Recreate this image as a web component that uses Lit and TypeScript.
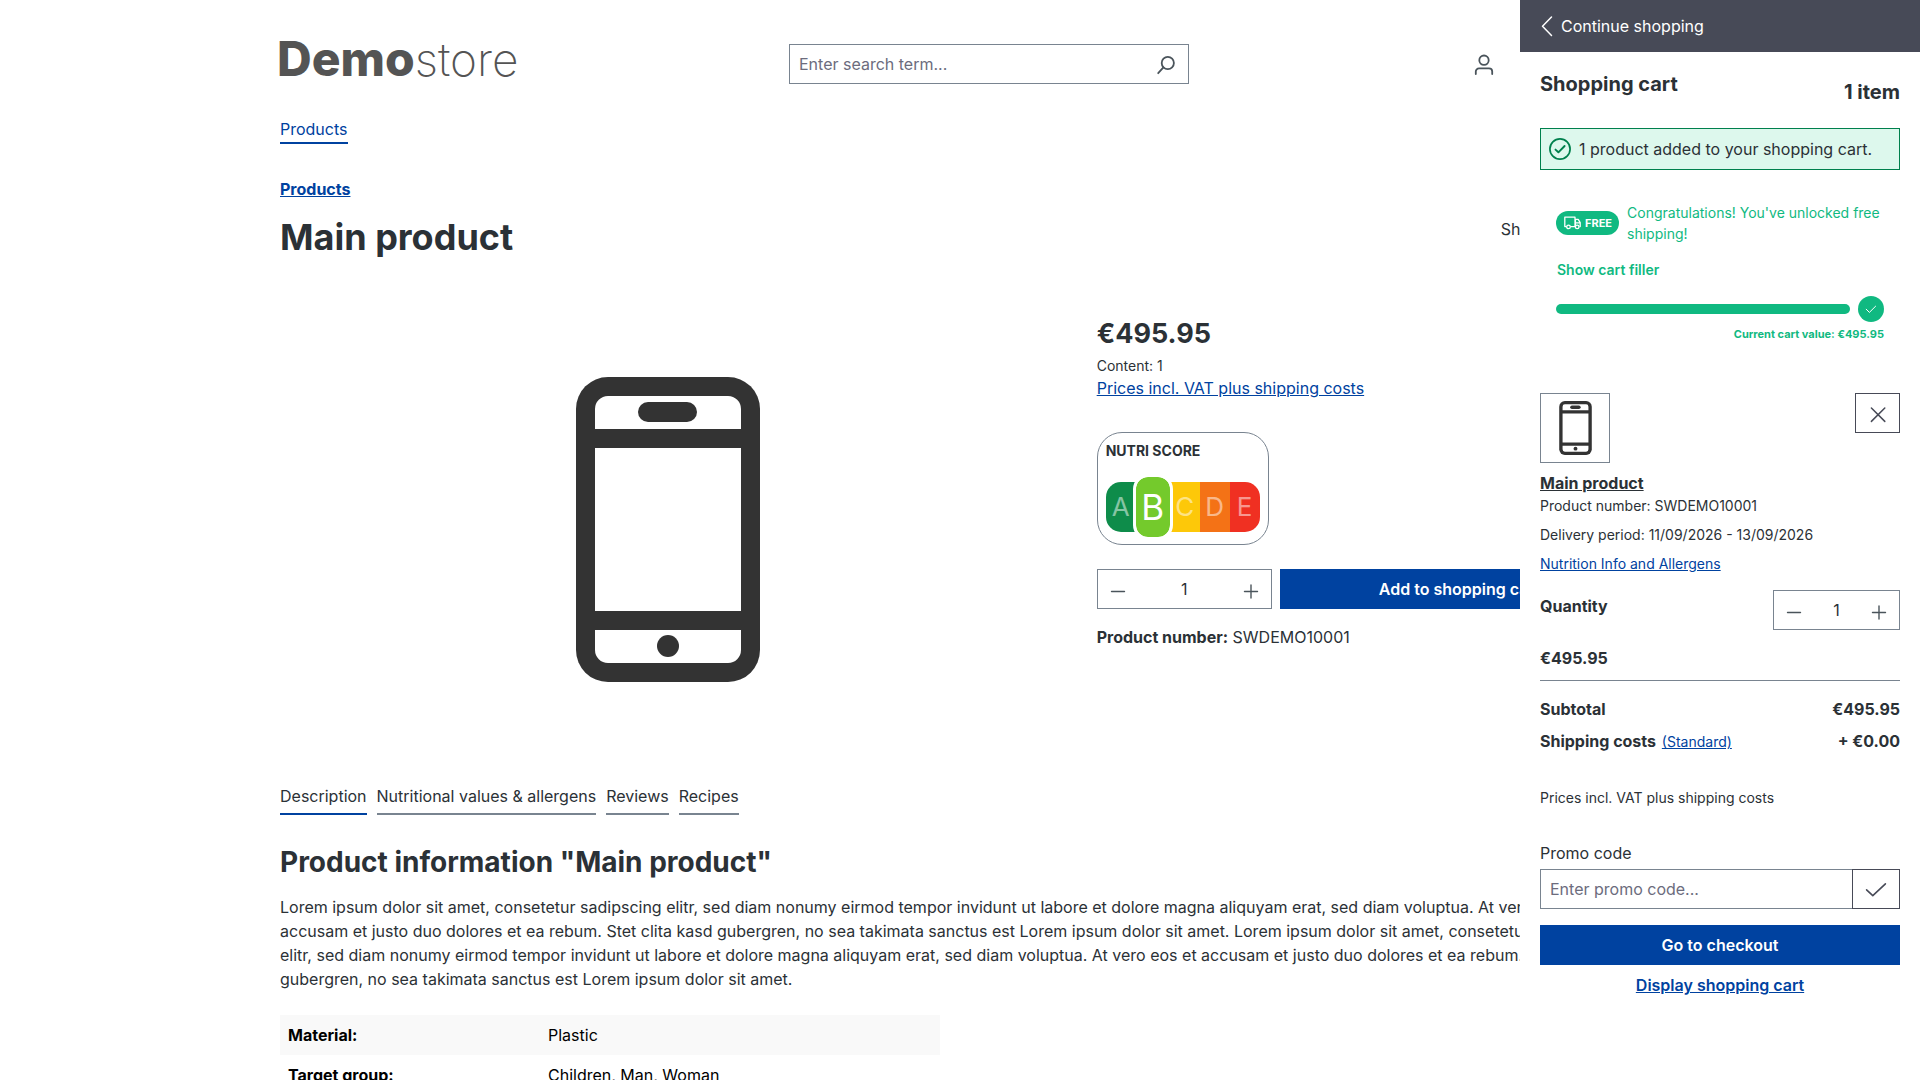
import { LitElement, html, css, svg } from "lit";
import { customElement, property } from "lit/decorators.js";
import { classMap } from "lit/directives/class-map.js";

const base = css`
  * { box-sizing: border-box; }
  h1, h2, p, dl, dd, dt { margin: 0; }
  button, input { font: inherit; color: inherit; margin: 0; border-radius: 0; }
  button { cursor: pointer; background: none; border: 0; padding: 0; }
  svg { display: block; flex: none; }
  a { color: #0042a0; text-decoration: underline; }
  input::placeholder { color: #6c6c7d; opacity: 1; }
  .primary {
    height: 40px; width: 100%; background: #0042a0; color: #fff; font-weight: 600;
    display: flex; align-items: center; justify-content: center; text-decoration: none; white-space: nowrap;
  }
`;

const phone = (height: number) => html`
  <svg width=${Math.round((height * 184) / 305)} height=${height} viewBox="0 0 184 305" role="img" aria-label="Main product">
    ${svg`<rect width="184" height="305" rx="32" fill="#333"/>
    <path d="M19 52V32a13 13 0 0 1 13-13H152a13 13 0 0 1 13 13V52ZM19 71H165V234H19ZM19 253H165V273a13 13 0 0 1-13 13H32a13 13 0 0 1-13-13Z" fill="#fff"/>
    <rect x="62" y="25" width="59" height="20" rx="10" fill="#333"/>
    <circle cx="92" cy="269" r="11" fill="#333"/>`}
  </svg>`;

@customElement("quantity-field")
class QuantityField extends LitElement {
  static styles = [base, css`
    :host { display: flex; min-width: 0; height: 40px; border: 1px solid #798490; background: #fff; }
    .step { width: 40px; display: flex; align-items: center; justify-content: center; color: #4a545b; flex: none; }
    .value { flex: 1; width: 0; min-width: 0; border: 0; padding: 0; text-align: center; background: none; line-height: 24px; }
  `];
  render() {
    return html`
      <button class="step" aria-label="Decrease quantity">
        <svg width="22" height="22" viewBox="0 0 22 22" fill="none" stroke="currentColor" stroke-width="1.4" stroke-linecap="round"><path d="M4.5 13.5H17.5"/></svg>
      </button>
      <input class="value" type="text" inputmode="numeric" aria-label="Quantity" .value=${"1"}>
      <button class="step" aria-label="Increase quantity">
        <svg width="22" height="22" viewBox="0 0 22 22" fill="none" stroke="currentColor" stroke-width="1.4" stroke-linecap="round"><path d="M4.5 13.5H17.5M11 7V20"/></svg>
      </button>`;
  }
}

@customElement("nutri-score")
class NutriScore extends LitElement {
  @property() grade = "B";
  static styles = [base, css`
    :host { display: block; width: 172px; border: 1px solid #798490; border-radius: 25px; padding: 8px 8px 12px; }
    .title { font-size: 14px; line-height: 20px; font-weight: 700; }
    .scale { display: flex; align-items: center; margin-top: 21px; height: 50px; }
    .cell {
      width: 30px; height: 50px; display: flex; align-items: center; justify-content: center;
      font-size: 26px; line-height: 48px; color: rgb(255 255 255 / 0.5);
    }
    .a { background: #0e8c4a; border-radius: 15px 0 0 15px; }
    .b { background: #74ca2c; }
    .c { background: #fdc809; }
    .d { background: #f47216; }
    .e { background: #f03022; border-radius: 0 15px 15px 0; }
    .active {
      width: 40px; height: 66px; margin: 0 -3px; border: 3px solid #fff; border-radius: 15px; z-index: 1;
      font-size: 35px; color: #fff; background-clip: padding-box;
    }
  `];
  render() {
    return html`
      <div class="title">NUTRI SCORE</div>
      <div class="scale">
        ${["A", "B", "C", "D", "E"].map((g) => html`
          <span class=${classMap({ cell: true, [g.toLowerCase()]: true, active: g === this.grade })}>${g}</span>`)}
      </div>`;
  }
}

@customElement("cart-drawer")
class CartDrawer extends LitElement {
  static styles = [base, css`
    :host { display: block; background: #fff; overflow: auto; }
    .back {
      width: 100%; height: 52px; background: #474a57; color: #fff; padding: 0 20px;
      display: flex; align-items: center; gap: 5px;
    }
    .body { padding: 20px; display: flex; flex-direction: column; }
    .head { display: flex; justify-content: space-between; font-size: 20px; line-height: 24px; font-weight: 700; }
    .head h2 { font-size: inherit; }
    .count { padding-top: 8px; }
    .alert {
      display: flex; align-items: center; gap: 8px; margin-top: 24px; padding: 8px;
      border: 1px solid #00804d; background: #ddf8ed; color: #2b3136;
    }
    .promo { display: flex; flex-direction: column; gap: 16px; padding: 32px 16px 0; color: #10b981; font-size: 14px; }
    .offer { display: flex; align-items: center; gap: 8px; line-height: 21px; }
    .badge {
      display: flex; align-items: center; gap: 4px; flex: none; height: 24px; padding: 0 7px 0 8px; border-radius: 12px;
      background: #10b981; color: #fff; font-size: 11px; font-weight: 700;
    }
    .filler { align-self: flex-start; padding: 0 1px; line-height: 20px; font-weight: 600; }
    .meter { display: grid; grid-template-columns: 1fr 26px; align-items: center; column-gap: 8px; row-gap: 4px; }
    .bar { height: 10px; border-radius: 5px; background: #10b981; }
    .done { height: 26px; border-radius: 50%; background: #10b981; display: flex; align-items: center; justify-content: center; }
    .total { grid-column: 1 / -1; text-align: right; font-size: 11px; line-height: 16px; font-weight: 700; }
    .item { margin-top: 51px; padding-bottom: 10px; border-bottom: 1px solid #798490; display: flex; flex-direction: column; gap: 8px; }
    .row { display: flex; justify-content: space-between; align-items: flex-start; }
    .thumb { width: 70px; height: 70px; border: 1px solid #798490; display: flex; align-items: center; justify-content: center; }
    .remove { width: 45px; height: 40px; border: 1px solid #474a57; display: flex; align-items: center; justify-content: center; }
    .name { color: inherit; font-weight: 700; }
    .small { font-size: 14px; line-height: 21px; }
    .strong { font-weight: 700; }
    .qty { margin: 8px 0; }
    .qty-label { padding-top: 4px; }
    .qty quantity-field { width: 127px; }
    .sums { display: flex; flex-direction: column; gap: 8px; padding-top: 16px; font-weight: 700; }
    .sums a { font-size: 14px; font-weight: 400; margin-left: 2px; }
    .sums dt, .sums dd { line-height: 24px; }
    .vat { font-size: 14px; margin: 32px 0 31px; }
    .code { display: flex; margin: 4px 0 16px; height: 40px; }
    .code-input { flex: 1; min-width: 0; border: 1px solid #798490; border-right: 0; padding: 0 9px; background: #fff; }
    .code-submit { width: 48px; border: 1px solid #474a57; display: flex; align-items: center; justify-content: center; }
    .display { align-self: center; margin-top: 8px; font-weight: 600; }
  `];
  render() {
    return html`
      <button class="back">
        <svg width="16" height="22" viewBox="0 0 16 22" fill="none" stroke="#fff" stroke-width="1.5" stroke-linecap="round" stroke-linejoin="round"><path d="M11.5 2L2.5 11.2L11.5 20.4"/></svg>
        Continue shopping
      </button>
      <div class="body">
        <div class="head"><h2>Shopping cart</h2><span class="count">1 item</span></div>
        <div class="alert" role="alert">
          <svg width="22" height="22" viewBox="0 0 22 22" fill="none" stroke="#00804d" stroke-width="1.7" stroke-linecap="round" stroke-linejoin="round"><circle cx="11" cy="11" r="10.1"/><path d="M6.5 11.6L9.4 14.3L15.6 8" stroke-width="1.9"/></svg>
          1 product added to your shopping cart.
        </div>
        <section class="promo">
          <div class="offer">
            <span class="badge">
              <svg width="17" height="14" viewBox="0 0 17 14" fill="none" stroke="#fff" stroke-width="1.3" stroke-linejoin="round"><path d="M2.6 10.6H.8V1.2H11V10.6H6.4M11 3.4H14.2L16.2 6.6V10.6H15.4M11.4 10.6V3.4M11.4 6.8H16"/><circle cx="4.5" cy="10.9" r="1.8"/><circle cx="13.2" cy="10.9" r="1.8"/></svg>
              FREE
            </span>
            <span>Congratulations! You've unlocked free shipping!</span>
          </div>
          <button class="filler">Show cart filler</button>
          <div class="meter">
            <div class="bar"></div>
            <div class="done"><svg width="12" height="10" viewBox="0 0 12 10" fill="none" stroke="#fff" stroke-linecap="round" stroke-linejoin="round"><path d="M1.2 5.2L4.4 8.4L10.6 2.2"/></svg></div>
            <div class="total">Current cart value: €495.95</div>
          </div>
        </section>
        <section class="item">
          <div class="row">
            <a class="thumb" href="#main-product">${phone(54)}</a>
            <button class="remove" aria-label="Remove">
              <svg width="22" height="22" viewBox="0 0 22 22" fill="none" stroke="#474a57" stroke-width="1.5" stroke-linecap="round"><path d="M4.4 6L17.8 19.4M17.8 6L4.4 19.4"/></svg>
            </button>
          </div>
          <div>
            <a class="name" href="#main-product">Main product</a>
            <p class="small">Product number: SWDEMO10001</p>
          </div>
          <p class="small">Delivery period: 11/09/2026 - 13/09/2026</p>
          <p class="small"><a href="#nutrition">Nutrition Info and Allergens</a></p>
          <div class="row qty">
            <span class="strong qty-label">Quantity</span>
            <quantity-field></quantity-field>
          </div>
          <div class="strong">€495.95</div>
        </section>
        <dl class="sums">
          <div class="row"><dt>Subtotal</dt><dd>€495.95</dd></div>
          <div class="row"><dt>Shipping costs <a href="#shipping">(Standard)</a></dt><dd>+ €0.00</dd></div>
        </dl>
        <p class="vat">Prices incl. VAT plus shipping costs</p>
        <label for="promo">Promo code</label>
        <div class="code">
          <input class="code-input" id="promo" type="text" placeholder="Enter promo code...">
          <button class="code-submit" aria-label="Redeem promo code">
            <svg width="22" height="22" viewBox="0 0 22 22" fill="none" stroke="#474a57" stroke-width="1.6" stroke-linecap="round" stroke-linejoin="round"><path d="M1.6 11.8L7.8 17.6L20.4 5.8"/></svg>
          </button>
        </div>
        <a class="primary" href="#checkout">Go to checkout</a>
        <a class="display" href="#cart">Display shopping cart</a>
      </div>`;
  }
}

@customElement("app-root")
class AppRoot extends LitElement {
  static styles = [base, css`
    :host {
      display: block; position: relative; height: 100vh; overflow: hidden; background: #fff;
      font: 400 16px/24px Inter, sans-serif; color: #2b3136;
    }
    .page { max-width: 1400px; margin: 0 auto; padding: 36px 20px 0; }
    .header { display: flex; align-items: center; height: 56px; }
    .logo {
      flex: 0 0 237px; min-width: 0; margin-left: -3px; padding-bottom: 10px;
      font-size: 46px; line-height: 48px; font-weight: 200; color: #545454;
      text-decoration: none; white-space: nowrap;
    }
    .logo strong { font-size: 48px; font-weight: 800; }
    .search { flex: 1; display: flex; height: 40px; max-width: 400px; margin: 0 auto; border: 1px solid #798490; }
    .search-input { flex: 1; min-width: 0; border: 0; padding: 0 9px; background: none; }
    .search-button { width: 46px; display: flex; align-items: center; justify-content: center; }
    .actions { flex: 0 0 176px; }
    .account { width: 40px; height: 40px; display: flex; align-items: center; justify-content: center; }
    .nav { display: flex; padding-top: 25px; }
    .nav a { text-decoration: none; border-bottom: 2px solid #0042a0; padding-bottom: 1px; }
    .crumbs { padding-top: 33px; font-weight: 700; }
    .heading { display: flex; justify-content: space-between; align-items: flex-start; padding-top: 16px; }
    .heading h1 { font-size: 36px; line-height: 40px; font-weight: 700; }
    .product { display: grid; grid-template-columns: 7fr 5fr; margin: 59px -20px 0; }
    .product > * { padding: 0 20px; }
    .media { height: 426px; display: flex; align-items: center; justify-content: center; }
    .price { font-size: 27px; line-height: 36px; font-weight: 700; }
    .content { font-size: 14px; line-height: 20px; margin-top: 4px; }
    nutri-score { margin: 32px 0 24px; }
    .buy { display: flex; gap: 8px; margin-bottom: 16px; }
    .buy quantity-field { flex: 0 0 175px; }
    .tabs { display: flex; gap: 10px; margin-top: 42px; }
    .tab { line-height: 24px; padding-bottom: 5px; border-bottom: 2px solid #798490; color: inherit; text-decoration: none; }
    .current { border-color: #0042a0; }
    .info { font-size: 28px; line-height: 36px; font-weight: 700; margin: 29px 0 15px; }
    .specs { width: 660px; border-collapse: collapse; margin-top: 24px; color: #000; }
    .specs th, .specs td { padding: 8px; text-align: left; font-weight: 400; line-height: 24px; }
    .specs th { width: 260px; font-weight: 700; }
    .specs tr:nth-child(odd) { background: #f9f9f9; }
    cart-drawer { position: absolute; top: 0; right: 0; bottom: 0; width: 400px; }
  `];
  render() {
    return html`
      <div class="page">
        <header class="header">
          <a class="logo" href="#home"><strong>Demo</strong>store</a>
          <form class="search" role="search">
            <input class="search-input" type="search" aria-label="Search" placeholder="Enter search term...">
            <button class="search-button" type="button" aria-label="Search">
              <svg width="22" height="22" viewBox="0 0 22 22" fill="none" stroke="#4a545b" stroke-width="1.8" stroke-linecap="round"><circle cx="13.8" cy="10" r="6.1"/><path d="M9.4 14.4L4.2 20.2"/></svg>
            </button>
          </form>
          <div class="actions">
            <button class="account" aria-label="Your account">
              <svg width="22" height="22" viewBox="0 0 22 22" fill="none" stroke="#4a545b" stroke-width="1.8" stroke-linecap="round"><circle cx="11" cy="7.2" r="4.7"/><path d="M2.8 21V18.6a3.2 3.2 0 0 1 3.2-3.2H16a3.2 3.2 0 0 1 3.2 3.2V21"/></svg>
            </button>
          </div>
        </header>
        <nav class="nav"><a href="#products">Products</a></nav>
        <div class="crumbs"><a href="#products">Products</a></div>
        <div class="heading"><h1>Main product</h1><span>Shopware Fashion</span></div>
        <section class="product">
          <div class="media">${phone(305)}</div>
          <div>
            <div class="price">€495.95</div>
            <div class="content">Content: 1</div>
            <a href="#shipping">Prices incl. VAT plus shipping costs</a>
            <nutri-score grade="B"></nutri-score>
            <div class="buy">
              <quantity-field></quantity-field>
              <button class="primary">Add to shopping cart</button>
            </div>
            <p><strong>Product number:</strong> SWDEMO10001</p>
          </div>
        </section>
        <nav class="tabs">
          ${["Description", "Nutritional values & allergens", "Reviews", "Recipes"].map((t, i) => html`
            <a class=${classMap({ tab: true, current: i === 0 })} href="#tab-${i}">${t}</a>`)}
        </nav>
        <h2 class="info">Product information "Main product"</h2>
        <p>Lorem ipsum dolor sit amet, consetetur sadipscing elitr, sed diam nonumy eirmod tempor invidunt ut labore et dolore magna aliquyam erat, sed diam voluptua. At vero eos et accusam et justo duo dolores et ea rebum. Stet clita kasd gubergren, no sea takimata sanctus est Lorem ipsum dolor sit amet. Lorem ipsum dolor sit amet, consetetur sadipscing elitr, sed diam nonumy eirmod tempor invidunt ut labore et dolore magna aliquyam erat, sed diam voluptua. At vero eos et accusam et justo duo dolores et ea rebum. Stet clita kasd gubergren, no sea takimata sanctus est Lorem ipsum dolor sit amet.</p>
        <table class="specs">
          <tbody>
            <tr><th scope="row">Material:</th><td>Plastic</td></tr>
            <tr><th scope="row">Target group:</th><td>Children, Man, Woman</td></tr>
          </tbody>
        </table>
      </div>
      <cart-drawer></cart-drawer>`;
  }
}
